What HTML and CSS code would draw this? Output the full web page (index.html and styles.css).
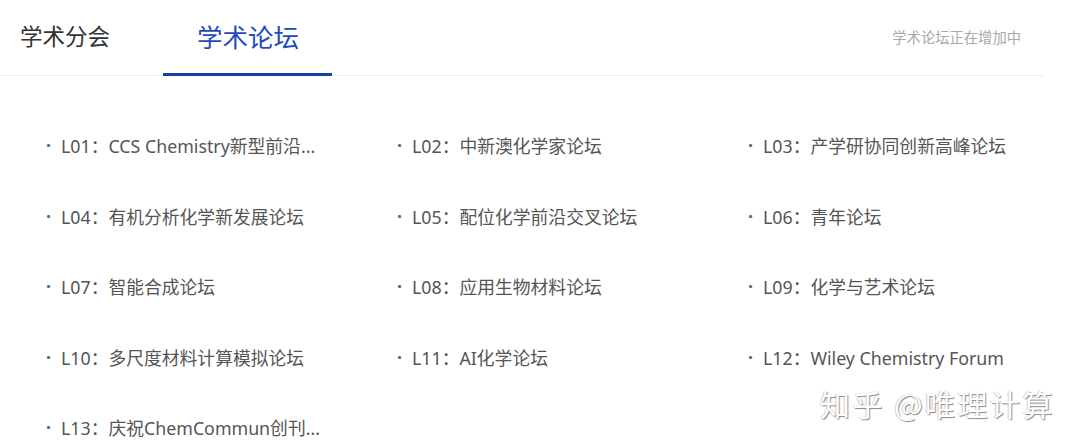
FILE: index.html
```html
<!DOCTYPE html>
<html>
<head>
  <meta charset="UTF-8">
  <title>学术论坛</title>
  <link rel="stylesheet" href="styles.css">
</head>
<body>
  <div class="page">
    <div class="tabs">
      <div class="tab">学术分会</div>
      <div class="tab active">学术论坛</div>
      <div class="tab-note">学术论坛正在增加中</div>
    </div>

    <ul class="forum-list">
      <li><span class="dot">·</span><span class="name">L01：CCS Chemistry新型前沿...</span></li>
      <li><span class="dot">·</span><span class="name">L02：中新澳化学家论坛</span></li>
      <li><span class="dot">·</span><span class="name">L03：产学研协同创新高峰论坛</span></li>
      <li><span class="dot">·</span><span class="name">L04：有机分析化学新发展论坛</span></li>
      <li><span class="dot">·</span><span class="name">L05：配位化学前沿交叉论坛</span></li>
      <li><span class="dot">·</span><span class="name">L06：青年论坛</span></li>
      <li><span class="dot">·</span><span class="name">L07：智能合成论坛</span></li>
      <li><span class="dot">·</span><span class="name">L08：应用生物材料论坛</span></li>
      <li><span class="dot">·</span><span class="name">L09：化学与艺术论坛</span></li>
      <li><span class="dot">·</span><span class="name">L10：多尺度材料计算模拟论坛</span></li>
      <li><span class="dot">·</span><span class="name">L11：AI化学论坛</span></li>
      <li><span class="dot">·</span><span class="name">L12：Wiley Chemistry Forum</span></li>
      <li><span class="dot">·</span><span class="name">L13：庆祝ChemCommun创刊...</span></li>
    </ul>

    <div class="watermark">知乎 @唯理计算</div>
  </div>
</body>
</html>
```

FILE: styles.css
```css
body {
  margin: 0;
  background-color: #ffffff;
  font-family: "Noto Sans CJK SC", "Noto Sans", sans-serif;
}
.page {
  position: relative;
  width: 1080px;
  height: 448px;
  overflow: hidden;
}
.tabs {
  display: flex;
  align-items: center;
  width: 1043px;
  height: 75px;
  border-bottom: 1px solid #eeeeee;
}
.tab {
  height: 75px;
  display: flex;
  align-items: center;
  box-sizing: border-box;
  font-size: 22.5px;
  color: #333333;
  padding: 0 0 5px 20px;
}
.tab.active {
  margin-left: 53px;
  padding: 0 33px 3px 34px;
  font-size: 25.5px;
  color: #1f4bbd;
  border-bottom: 3px solid #1a3fa8;
  margin-bottom: -2px;
}
.tab-note {
  margin-left: auto;
  margin-right: 22px;
  font-size: 14.3px;
  color: #a8a8a8;
  padding-bottom: 3px;
}
.forum-list {
  list-style: none;
  margin: 0;
  padding: 34px 0 0 46px;
  display: grid;
  grid-template-columns: 351px 351px 300px;
  grid-auto-rows: 70.5px;
}
.forum-list li {
  display: flex;
  align-items: center;
  font-family: "Noto Sans", "Noto Sans CJK SC", sans-serif;
  font-size: 17.8px;
  color: #555555;
  white-space: nowrap;
}
.dot {
  width: 15px;
  font-size: 18px;
  font-weight: bold;
  color: #666666;
}
.watermark {
  position: absolute;
  left: 820px;
  top: 381px;
  font-size: 30px;
  color: #ffffff;
  letter-spacing: 2.5px;
  text-shadow: 1px 1px 1px #8a8a8a, -1px 0 1px #cfcfcf;
}
```
